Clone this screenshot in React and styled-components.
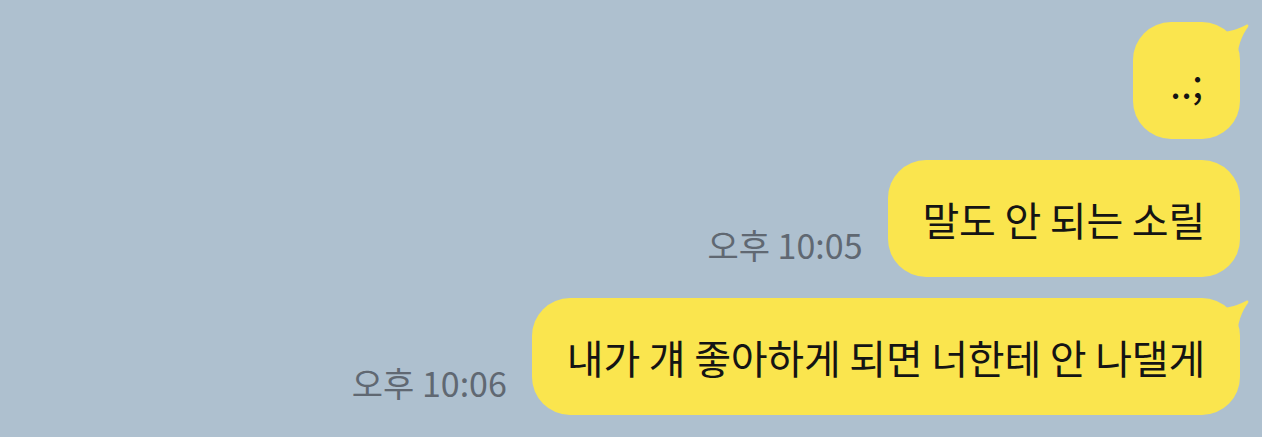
import styled, { createGlobalStyle } from "styled-components";

const GlobalStyle = createGlobalStyle`
  html, body {
    margin: 0;
    padding: 0;
    background: #aec0cf;
  }
  body {
    font-family: "Noto Sans CJK KR", "Noto Sans", sans-serif;
  }
`;

const messages = [
  { id: 1, text: "..;", tail: true },
  { id: 2, text: "말도 안 되는 소릴", time: "오후 10:05" },
  { id: 3, text: "내가 걔 좋아하게 되면 너한테 안 나댈게", time: "오후 10:06", tail: true },
];

export default function App() {
  return (
    <>
      <GlobalStyle />
      <Chat>
        {messages.map((m) => (
          <Row key={m.id}>
            {m.time && <Time>{m.time}</Time>}
            <Bubble>
              {m.tail && (
                <Tail viewBox="0 0 30 40" aria-hidden="true">
                  <path d="M0 9 C10 9 18 6 26 2 C28 1 29 2 28 4 C22 12 17 24 17 40 L0 40 Z" />
                </Tail>
              )}
              <BubbleText>{m.text}</BubbleText>
            </Bubble>
          </Row>
        ))}
      </Chat>
    </>
  );
}

/* ——— styled-components CSS ——— */
const Chat = styled.div`
  width: 1262px;
  height: 437px;
  box-sizing: border-box;
  padding: 22px 22px 0 0;
  display: flex;
  flex-direction: column;
  align-items: flex-end;
  gap: 21px;
  overflow: hidden;
`;

const Row = styled.div`
  display: flex;
  align-items: flex-end;
  gap: 25px;
`;

const Time = styled.span`
  font-size: 34px;
  color: #606872;
  line-height: 1;
  padding-bottom: 15px;
`;

const Bubble = styled.div`
  position: relative;
  box-sizing: border-box;
  height: 117px;
  min-width: 107px;
  padding: 0 35px;
  display: flex;
  align-items: center;
  justify-content: center;
  background: #fae54e;
  border-radius: 38px;
`;

const Tail = styled.svg`
  position: absolute;
  top: 1px;
  right: -10px;
  width: 30px;
  height: 40px;
  fill: #fae54e;
`;

const BubbleText = styled.span`
  position: relative;
  font-size: 40px;
  line-height: 1.4;
  letter-spacing: -0.2px;
  color: #141414;
  white-space: nowrap;
`;
